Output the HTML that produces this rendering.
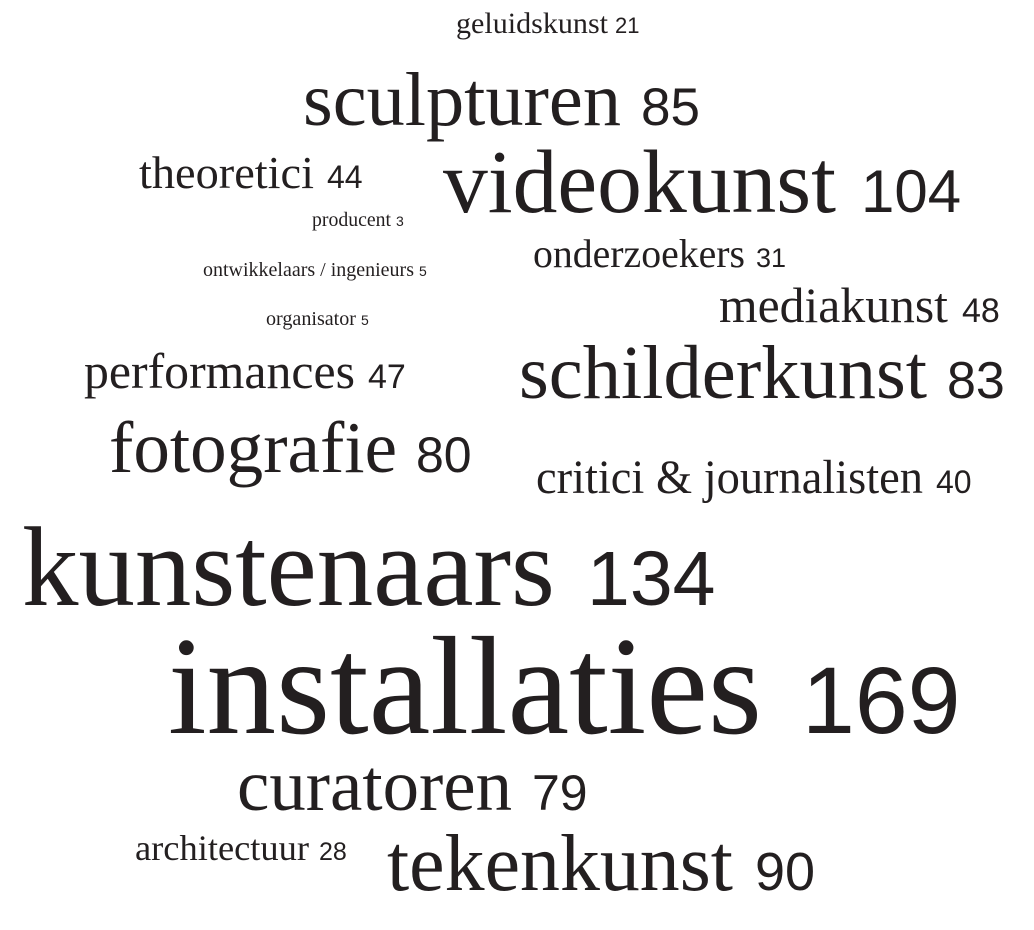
<!DOCTYPE html>
<html><head><meta charset="utf-8"><style>
html,body{margin:0;padding:0;background:#fff;}
svg{display:block}
.w{font-family:"Liberation Serif",serif;fill:#231f20}
.n{font-family:"Liberation Sans",sans-serif;fill:#231f20}
</style></head><body>
<svg width="1034" height="930" viewBox="0 0 1034 930" xmlns="http://www.w3.org/2000/svg">
<text class="w" x="456" y="33" font-size="30" textLength="152" lengthAdjust="spacingAndGlyphs">geluidskunst</text>
<text class="n" x="615" y="33" font-size="22">21</text>

<text class="w" x="303" y="125" font-size="76" textLength="318" lengthAdjust="spacingAndGlyphs">sculpturen</text>
<text class="n" x="641" y="125" font-size="53">85</text>

<text class="w" x="139" y="188" font-size="46" textLength="175" lengthAdjust="spacingAndGlyphs">theoretici</text>
<text class="n" x="327" y="188" font-size="32">44</text>

<text class="w" x="443" y="212" font-size="90" textLength="393" lengthAdjust="spacingAndGlyphs">videokunst</text>
<text class="n" x="861" y="212" font-size="60">104</text>

<text class="w" x="312" y="226" font-size="20" textLength="79" lengthAdjust="spacingAndGlyphs">producent</text>
<text class="n" x="396" y="226" font-size="14">3</text>

<text class="w" x="533" y="267" font-size="40" textLength="212" lengthAdjust="spacingAndGlyphs">onderzoekers</text>
<text class="n" x="756" y="267" font-size="27">31</text>

<text class="w" x="203" y="276" font-size="20" textLength="211" lengthAdjust="spacingAndGlyphs">ontwikkelaars / ingenieurs</text>
<text class="n" x="419" y="276" font-size="14">5</text>

<text class="w" x="719" y="322" font-size="50" textLength="229" lengthAdjust="spacingAndGlyphs">mediakunst</text>
<text class="n" x="962" y="322" font-size="34">48</text>

<text class="w" x="266" y="325" font-size="20" textLength="90" lengthAdjust="spacingAndGlyphs">organisator</text>
<text class="n" x="361" y="325" font-size="14">5</text>

<text class="w" x="84" y="388" font-size="50" textLength="271" lengthAdjust="spacingAndGlyphs">performances</text>
<text class="n" x="368" y="388" font-size="34">47</text>

<text class="w" x="519" y="398" font-size="76" textLength="408" lengthAdjust="spacingAndGlyphs">schilderkunst</text>
<text class="n" x="947" y="398" font-size="52">83</text>

<text class="w" x="109" y="472" font-size="73" textLength="288" lengthAdjust="spacingAndGlyphs">fotografie</text>
<text class="n" x="416" y="472" font-size="50">80</text>

<text class="w" x="536" y="493" font-size="48" textLength="387" lengthAdjust="spacingAndGlyphs">critici &amp; journalisten</text>
<text class="n" x="936" y="493" font-size="32">40</text>

<text class="w" x="22" y="605" font-size="113" textLength="533" lengthAdjust="spacingAndGlyphs">kunstenaars</text>
<text class="n" x="587" y="605" font-size="77">134</text>

<text class="w" x="168" y="733" font-size="140" textLength="594" lengthAdjust="spacingAndGlyphs">installaties</text>
<text class="n" x="802" y="733" font-size="95">169</text>

<text class="w" x="237" y="810" font-size="73" textLength="275" lengthAdjust="spacingAndGlyphs">curatoren</text>
<text class="n" x="532" y="810" font-size="50">79</text>

<text class="w" x="135" y="860" font-size="36" textLength="174" lengthAdjust="spacingAndGlyphs">architectuur</text>
<text class="n" x="319" y="860" font-size="25">28</text>

<text class="w" x="387" y="890" font-size="80" textLength="346" lengthAdjust="spacingAndGlyphs">tekenkunst</text>
<text class="n" x="755" y="890" font-size="54">90</text>
</svg>
</body></html>
